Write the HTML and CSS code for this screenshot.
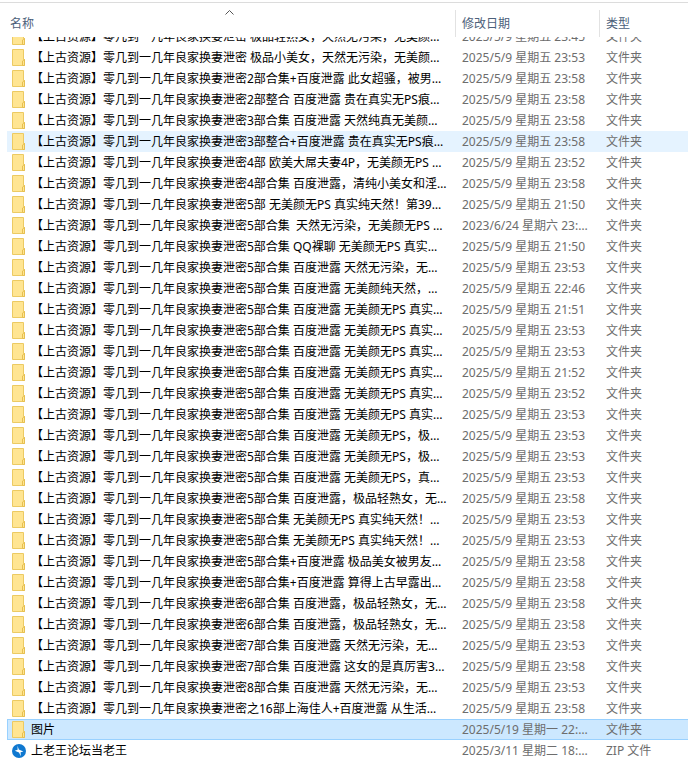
FILE: index.html
```
<!DOCTYPE html>
<html lang="zh-CN">
<head>
  <meta charset="UTF-8" />
  <meta name="viewport" content="width=device-width, initial-scale=1.0" />
  <title>文件列表</title>
  <link rel="stylesheet" href="styles.css">
</head>
<body>
  <svg class="symbols" aria-hidden="true">
    <symbol id="folder" viewBox="0 0 14 17">
      <path d="M0.5 0.5H11.5V10.5H12.5V16.5H0.5Z" fill="#ffe592" stroke="#ecca62" />
      <path d="M10.5 16.5V12L12.5 10.5V16.5Z" fill="#ffe592" stroke="#e6bf50" />
    </symbol>
    <symbol id="zip" viewBox="0 0 14 14">
      <circle cx="7" cy="7" r="7" fill="#0f78d0" />
      <path d="M5.6 1.8L6.8 5.6L11.4 7.4L8.6 8.2L8.8 12.2L7 8.6L2.8 6.8L5.6 5.8Z" fill="#fff" />
    </symbol>
  </svg>

  <div id="fileView">
    <table class="files">
      <colgroup>
        <col class="col-name">
        <col class="col-date">
        <col class="col-type">
      </colgroup>
      <thead>
        <tr>
          <th class="sorted">名称
            <svg class="sort" viewBox="0 0 9 5" aria-hidden="true"><path d="M0.5 4.5L4.5 0.5L8.5 4.5" fill="none" stroke="#555" /></svg>
          </th>
          <th>修改日期</th>
          <th>类型</th>
        </tr>
      </thead>
      <tbody id="fileList"></tbody>
    </table>
  </div>

  <script>
    const PREFIX = "【上古资源】零几到一几年良家换妻泄密";
    const list = document.getElementById("fileList");

    // 名称（省略前缀）、修改日期
    const folders = [
      [" 极品轻熟女，天然无污染，无美颜…", "2025/5/9 星期五 23:45"],
      [" 极品小美女，天然无污染，无美颜…", "2025/5/9 星期五 23:53"],
      ["2部合集+百度泄露 此女超骚，被男…", "2025/5/9 星期五 23:58"],
      ["2部整合 百度泄露 贵在真实无PS痕…", "2025/5/9 星期五 23:58"],
      ["3部合集 百度泄露 天然纯真无美颜…", "2025/5/9 星期五 23:58"],
      ["3部整合+百度泄露 贵在真实无PS痕…", "2025/5/9 星期五 23:58", "hover"],
      ["4部 欧美大屌夫妻4P，无美颜无PS …", "2025/5/9 星期五 23:52"],
      ["4部合集 百度泄露，清纯小美女和淫…", "2025/5/9 星期五 23:58"],
      ["5部 无美颜无PS 真实纯天然！第39…", "2025/5/9 星期五 21:50"],
      ["5部合集  天然无污染，无美颜无PS …", "2023/6/24 星期六 23:…"],
      ["5部合集 QQ裸聊 无美颜无PS 真实…", "2025/5/9 星期五 21:50"],
      ["5部合集 百度泄露 天然无污染，无…", "2025/5/9 星期五 23:53"],
      ["5部合集 百度泄露 无美颜纯天然，…", "2025/5/9 星期五 22:46"],
      ["5部合集 百度泄露 无美颜无PS 真实…", "2025/5/9 星期五 21:51"],
      ["5部合集 百度泄露 无美颜无PS 真实…", "2025/5/9 星期五 23:53"],
      ["5部合集 百度泄露 无美颜无PS 真实…", "2025/5/9 星期五 23:53"],
      ["5部合集 百度泄露 无美颜无PS 真实…", "2025/5/9 星期五 21:52"],
      ["5部合集 百度泄露 无美颜无PS 真实…", "2025/5/9 星期五 23:52"],
      ["5部合集 百度泄露 无美颜无PS 真实…", "2025/5/9 星期五 23:53"],
      ["5部合集 百度泄露 无美颜无PS，极…", "2025/5/9 星期五 23:53"],
      ["5部合集 百度泄露 无美颜无PS，极…", "2025/5/9 星期五 23:53"],
      ["5部合集 百度泄露 无美颜无PS，真…", "2025/5/9 星期五 23:53"],
      ["5部合集 百度泄露，极品轻熟女，无…", "2025/5/9 星期五 23:58"],
      ["5部合集 无美颜无PS 真实纯天然！…", "2025/5/9 星期五 23:53"],
      ["5部合集 无美颜无PS 真实纯天然！…", "2025/5/9 星期五 23:53"],
      ["5部合集+百度泄露 极品美女被男友…", "2025/5/9 星期五 23:58"],
      ["5部合集+百度泄露 算得上古早露出…", "2025/5/9 星期五 23:58"],
      ["6部合集 百度泄露，极品轻熟女，无…", "2025/5/9 星期五 23:58"],
      ["6部合集 百度泄露，极品轻熟女，无…", "2025/5/9 星期五 23:58"],
      ["7部合集 百度泄露 天然无污染，无…", "2025/5/9 星期五 23:53"],
      ["7部合集 百度泄露 这女的是真厉害3…", "2025/5/9 星期五 23:58"],
      ["8部合集 百度泄露 天然无污染，无…", "2025/5/9 星期五 23:53"],
      ["之16部上海佳人+百度泄露 从生活…", "2025/5/9 星期五 23:58"]
    ];

    function addRow(icon, name, date, type, state) {
      const tr = document.createElement("tr");
      if (state) tr.className = state;
      tr.innerHTML = `<td class="name"><div class="entry"><svg class="icon ${icon}"><use href="#${icon}"/></svg><span>${name}</span></div></td><td>${date}</td><td>${type}</td>`;
      list.appendChild(tr);
    }

    folders.forEach(([name, date, state]) => addRow("folder", PREFIX + name, date, "文件夹", state));
    addRow("folder", "图片", "2025/5/19 星期一 22:…", "文件夹", "selected");
    addRow("zip", "上老王论坛当老王", "2025/3/11 星期二 18:…", "ZIP 文件");

    // 滚动位置
    document.getElementById("fileView").scrollTop = 11;
  </script>
</body>
</html>
```
FILE: styles.css
```
* {
  box-sizing: border-box;
}
body {
  margin: 0;
  padding-top: 2px;
  height: 100vh;
  display: flex;
  flex-direction: column;
  background: #fff;
  color: #000;
  font-family: "Noto Sans", "Noto Sans CJK SC", sans-serif;
  font-size: 12px;
  line-height: 20px;
}
.symbols {
  display: none;
}
#fileView {
  flex: 1;
  min-height: 0;
  overflow-y: auto;
  scrollbar-width: none;
  border-top: 1px solid #dcdcdc;
  padding: 0 0 1px 7px;
}

/* 表格 */
.files {
  width: 100%;
  table-layout: fixed;
  border-collapse: separate;
  border-spacing: 0;
}
.col-name {
  width: 448px;
}
.col-date {
  width: 144px;
}
th {
  position: sticky;
  top: 0;
  z-index: 1;
  height: 34px;
  padding: 8px 7px 0;
  background: linear-gradient(#e2e2e2, #e2e2e2) left bottom / 1px 27px no-repeat #fff;
  color: #4c607a;
  font-weight: normal;
  text-align: left;
}
th.sorted {
  padding-left: 3px;
  background: #fff;
}
.sort {
  position: absolute;
  top: 7px;
  left: 218px;
  width: 9px;
  height: 5px;
}
td {
  height: 21px;
  padding: 0 7px;
  color: #6d6d6d;
  white-space: pre;
  overflow: hidden;
  border: 0 solid transparent;
  border-width: 1px 0;
  line-height: 19px;
}
td.name {
  padding: 0 0 0 5px;
  color: #000;
}
.entry {
  display: flex;
  align-items: center;
  gap: 5px;
  height: 19px;
}
.icon {
  flex: none;
  width: 14px;
  height: 17px;
}
.zip {
  height: 14px;
}
.hover td {
  background: #e5f3ff;
}
.selected td {
  background: #cce8ff;
  border-color: #99d1ff;
}
.selected td.name {
  border-left-width: 1px;
  padding-left: 4px;
}
```
